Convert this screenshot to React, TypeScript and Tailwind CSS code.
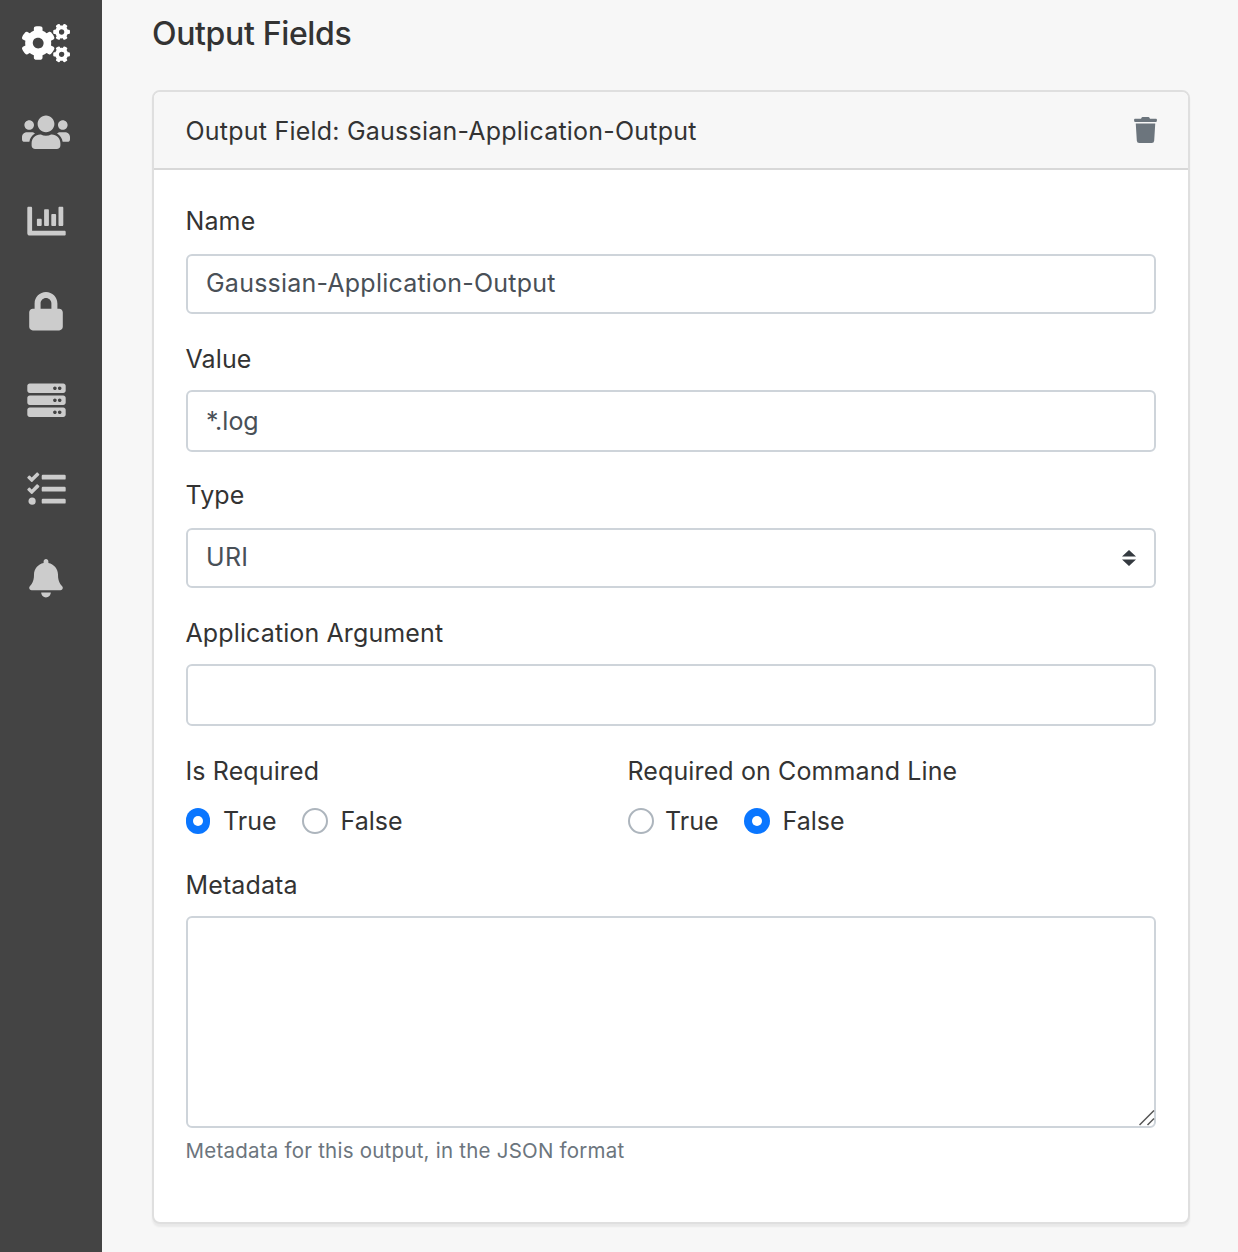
import React, { useState } from "react";
import { FaCogs, FaUsers, FaChartBar, FaLock, FaServer, FaTasks, FaBell, FaTrash } from "react-icons/fa";

const NAV = [
  { Icon: FaCogs, label: "Applications", active: true, width: "w-[48px]", pad: "pb-[2px]" },
  { Icon: FaUsers, label: "Groups", width: "w-[48px]", pad: "pb-[3px]" },
  { Icon: FaChartBar, label: "Statistics", width: "w-[39px]", pad: "pb-[2px]" },
  { Icon: FaLock, label: "Credentials", width: "w-[34px]", pad: "pb-0" },
  { Icon: FaServer, label: "Resources", width: "w-[39px]", pad: "pb-[1px]" },
  { Icon: FaTasks, label: "Tasks", width: "w-[39px]", pad: "pb-0" },
  { Icon: FaBell, label: "Notices", width: "w-[34px]", pad: "pb-0" },
];

const FIELD =
  "block w-full rounded-[6px] border-2 border-[#ced4da] bg-white px-[18px] text-[#495057] outline-none";

function Label({ children }: { children: React.ReactNode }) {
  return <div className="-ml-[0.5px] h-[38px] leading-[38px] tracking-[0.12px] whitespace-nowrap">{children}</div>;
}

type RadioProps = { label: string; checked: boolean; narrow?: boolean; gap: string; onSelect: () => void };

function Radio({ label, checked, narrow, gap, onSelect }: RadioProps) {
  const size = narrow ? "mr-[2px] h-[26px] w-[24px]" : "size-[26px]";
  return (
    <button type="button" role="radio" aria-checked={checked} onClick={onSelect} className={`flex h-[38px] items-center ${gap}`}>
      {checked ? (
        <span className={`flex items-center justify-center rounded-full bg-[#0a76ff] ${size}`}>
          <span className="size-[10px] rounded-full bg-white" />
        </span>
      ) : (
        <span className={`rounded-full border-2 border-[#adb5bd] bg-white ${size}`} />
      )}
      <span className="pt-[2px]">{label}</span>
    </button>
  );
}

function RadioGroup({ label, initial, narrow }: { label: string; initial: boolean; narrow?: boolean }) {
  const [value, setValue] = useState(initial);
  return (
    <div className="w-[442px]">
      <Label>{label}</Label>
      <div role="radiogroup" aria-label={label} className="mt-[12px] flex gap-[25px]">
        <Radio label="True" checked={value} narrow={narrow} gap="gap-[11px]" onSelect={() => setValue(true)} />
        <Radio label="False" checked={!value} gap="gap-[13px]" onSelect={() => setValue(false)} />
      </div>
    </div>
  );
}

export default function App() {
  return (
    <div className="flex h-[1252px] w-[1238px] overflow-hidden bg-[#f7f7f7] font-['Inter',sans-serif] text-[25px] text-[#333333]">
      <nav className="flex w-[102px] shrink-0 flex-col bg-[#444444] pr-[10px]">
        {NAV.map(({ Icon, label, active, width, pad }) => (
          <a key={label} aria-label={label} className={`flex h-[89px] items-center justify-center ${pad} ${active ? "text-white" : "text-[#cccccc]"}`}>
            <Icon className={`h-[38.4px] ${width}`} />
          </a>
        ))}
      </nav>
      <main className="w-[1088px] pl-[50px]">
        <h1 className="mt-[13px] h-[40px] text-[32px] leading-[41px] font-medium tracking-[-0.35px]">Output Fields</h1>
        <section className="mt-[37px] h-[1134px] w-[1038px] rounded-[8px] border-2 border-[#dfdfdf] bg-white shadow-[0_3px_2px_rgba(0,0,0,0.06)]">
          <header className="flex h-[78px] items-center justify-between rounded-t-[6px] border-b-2 border-[#d8d8d8] bg-[#f7f7f7] pr-[31px] pl-[31.5px]">
            <span className="pt-[3px] tracking-[0.22px]">Output Field: Gaussian-Application-Output</span>
            <FaTrash className="h-[26px] w-[23px] text-[#6c757d]" />
          </header>
          <div className="px-[32px] pt-[32px]">
            <Label>Name</Label>
            <input className={`${FIELD} mt-[14px] h-[60px] pb-[2px] tracking-[0.22px]`} defaultValue="Gaussian-Application-Output" />
            <div className="mt-[26px]">
              <Label>Value</Label>
              <input className={`${FIELD} mt-[12px] h-[62px]`} defaultValue="*.log" />
            </div>
            <div className="mt-[24px]">
              <Label>Type</Label>
              <div className={`${FIELD} mt-[14px] flex h-[60px] items-center justify-between`}>
                <span className="tracking-[0.3px]">URI</span>
                <svg viewBox="0 0 14 16" className="h-[16px] w-[14px]" fill="#343a40">
                  <path d="M0 6.5 7 0l7 6.5zM0 9.5h14L7 16z" />
                </svg>
              </div>
            </div>
            <div className="mt-[26px]">
              <Label>Application Argument</Label>
              <input className={`${FIELD} mt-[12px] h-[62px]`} />
            </div>
            <div className="mt-[26px] flex">
              <RadioGroup label="Is Required" initial={true} narrow />
              <RadioGroup label="Required on Command Line" initial={false} />
            </div>
            <div className="mt-[26px]">
              <Label>Metadata</Label>
              <div className="relative mt-[12px]">
                <textarea className={`${FIELD} h-[212px] resize-none`} />
                <svg viewBox="0 0 16 16" className="pointer-events-none absolute right-[1px] bottom-[2px] size-[16px]" fill="none" stroke="#555" strokeWidth="1.5">
                  <path d="M0.5 15 15 .5M8.500 15 15 8.500" />
                </svg>
              </div>
            </div>
            <p className="mt-[8px] -ml-[0.5px] text-[20.5px] leading-[30px] tracking-[0.23px] text-[#6c757d]">Metadata for this output, in the JSON format</p>
          </div>
        </section>
      </main>
    </div>
  );
}
